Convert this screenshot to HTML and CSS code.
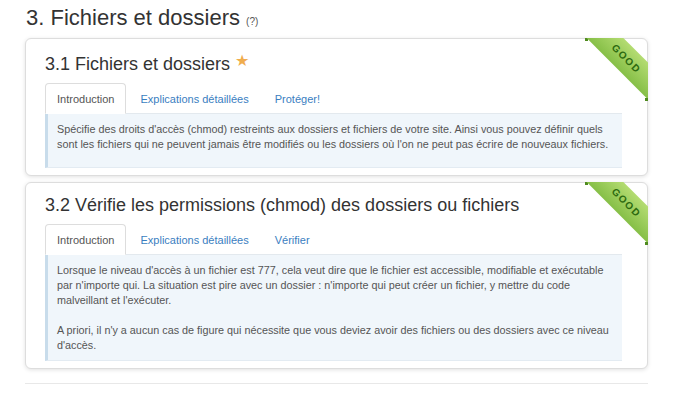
FILE: index.html
```html
<!DOCTYPE html>
<html lang="fr">
<head>
  <meta charset="UTF-8">
  <meta name="viewport" content="width=device-width, initial-scale=1.0">
  <title>Fichiers et dossiers</title>
  <link rel="stylesheet" href="styles.css">
</head>
<body>
  <div class="page">
    <h2 class="section-title">3. Fichiers et dossiers <small class="help">(?)</small></h2>

    <div class="scan-card">
      <div class="ribbon-wrap"><div class="ribbon">GOOD</div></div>
      <h3 class="card-title">3.1 Fichiers et dossiers <span class="star">&#9733;</span></h3>
      <ul class="tabs">
        <li class="tab active">Introduction</li>
        <li class="tab">Explications détaillées</li>
        <li class="tab">Protéger!</li>
      </ul>
      <div class="tab-content tab-content-short">
        <p>Spécifie des droits d'accès (chmod) restreints aux dossiers et fichiers de votre site. Ainsi vous pouvez définir quels sont les fichiers qui ne peuvent jamais être modifiés ou les dossiers où l'on ne peut pas écrire de nouveaux fichiers.</p>
      </div>
    </div>

    <div class="scan-card">
      <div class="ribbon-wrap"><div class="ribbon">GOOD</div></div>
      <h3 class="card-title">3.2 Vérifie les permissions (chmod) des dossiers ou fichiers</h3>
      <ul class="tabs">
        <li class="tab active">Introduction</li>
        <li class="tab">Explications détaillées</li>
        <li class="tab">Vérifier</li>
      </ul>
      <div class="tab-content">
        <p>Lorsque le niveau d'accès à un fichier est 777, cela veut dire que le fichier est accessible, modifiable et exécutable par n'importe qui. La situation est pire avec un dossier : n'importe qui peut créer un fichier, y mettre du code malveillant et l'exécuter.</p>
        <p>A priori, il n'y a aucun cas de figure qui nécessite que vous deviez avoir des fichiers ou des dossiers avec ce niveau d'accès.</p>
      </div>
    </div>

    <hr class="separator">
  </div>
</body>
</html>
```

FILE: styles.css
```css
body {
  font-family: 'Liberation Sans', Arial, sans-serif;
  margin: 0;
  padding: 0;
  background-color: #fff;
  color: #333;
}

.page {
  padding: 5px 32px 0 25px;
}

.section-title {
  font-size: 22px;
  font-weight: normal;
  line-height: 26px;
  margin: 0 0 3px 1px;
  color: #333;
}

.help {
  font-size: 10px;
  color: #555;
}

.scan-card {
  position: relative;
  background-color: white;
  border: 1px solid #ddd;
  border-radius: 6px;
  box-shadow: 0 1px 4px rgba(0, 0, 0, 0.12);
  padding: 11px 25px 7px 19px;
  margin-bottom: 6px;
}

.card-title {
  font-size: 18px;
  font-weight: normal;
  line-height: 22px;
  margin: 0 0 8px;
  color: #333;
}

.star {
  color: #f0ad4e;
  font-size: 16px;
  vertical-align: 4px;
}

.tabs {
  list-style: none;
  margin: 0;
  padding: 0;
  display: flex;
  gap: 2px;
  border-bottom: 1px solid #e3e9ee;
}

.tab {
  font-size: 11px;
  line-height: 18px;
  padding: 6px 11px 5px;
  color: #3a7ebf;
  border: 1px solid transparent;
  border-radius: 4px 4px 0 0;
  margin-bottom: -1px;
}

.tab.active {
  color: #555;
  background-color: white;
  border-color: #ddd #ddd transparent;
}

.tab-content {
  background-color: #f0f6fb;
  border-left: 3px solid #c8dceb;
  border-bottom: 1px solid #e3ebf2;
  padding: 8px 5px 7px 9px;
  font-size: 10.8px;
  line-height: 15px;
  color: #555;
}

.tab-content-short {
  padding-bottom: 15px;
}

.tab-content p {
  margin: 0;
}

.tab-content p + p {
  margin-top: 15px;
}

.ribbon-wrap {
  position: absolute;
  top: -1px;
  right: -1px;
  width: 63px;
  height: 63px;
  overflow: hidden;
  border-top-right-radius: 6px;
}

.ribbon-wrap::before,
.ribbon-wrap::after {
  content: "";
  position: absolute;
  width: 3px;
  height: 3px;
  background-color: #4f8a1f;
}

.ribbon-wrap::before {
  top: 0;
  left: 0;
}

.ribbon-wrap::after {
  bottom: 0;
  right: 0;
}

.ribbon {
  position: absolute;
  left: -9px;
  top: 8px;
  width: 100px;
  height: 26px;
  line-height: 26px;
  text-align: center;
  transform: rotate(45deg);
  background: linear-gradient(to bottom, #b4dc72, #86bf47);
  color: #2c6a10;
  font-size: 10px;
  font-weight: bold;
  letter-spacing: 1.5px;
}

.separator {
  border: 0;
  border-top: 1px solid #e8e8e8;
  margin: 14px 0 0;
}
```
